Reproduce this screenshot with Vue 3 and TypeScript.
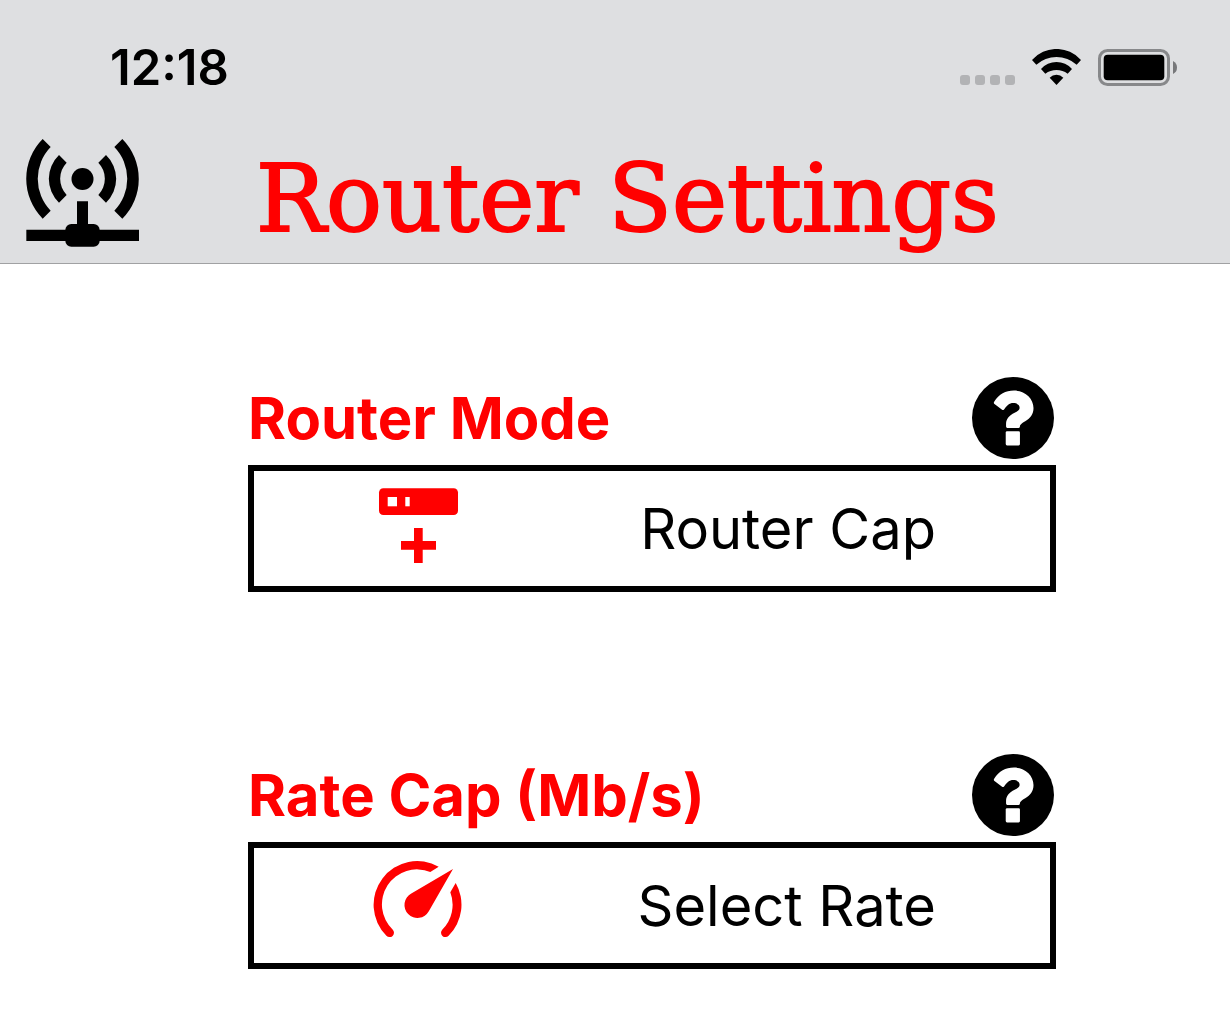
<script setup lang="ts">
interface Field {
  id: string
  label: string
  value: string
  icon: 'router' | 'gauge'
}

const fields: Field[] = [
  { id: 'router-mode', label: 'Router Mode', value: 'Router Cap', icon: 'router' },
  { id: 'rate-cap', label: 'Rate Cap (Mb/s)', value: 'Select Rate', icon: 'gauge' },
]
</script>

<template>
  <div class="screen">
    <header class="header">
      <div class="status">
        <time class="clock">12:18</time>
        <div class="indicators">
          <div class="signal"><span v-for="n in 4" :key="n" class="dot"></span></div>
          <svg class="wifi" viewBox="276 57 147 108" aria-hidden="true">
            <path d="M276 90A98 98 0 0 1 423 90L410 104A91 91 0 0 0 289 104Z" />
            <path d="M303 117A62 62 0 0 1 396 117L383 131A56 56 0 0 0 316 131Z" />
            <path d="M329 143A29 29 0 0 1 370 143L349.5 165Z" />
          </svg>
          <svg class="battery" viewBox="0 0 79 37" aria-hidden="true">
            <rect x="1.5" y="1.5" width="69" height="34" rx="8" fill="none" stroke="#87888a" stroke-width="3" />
            <rect x="5.7" y="5.7" width="60.6" height="25.6" rx="4" />
            <path d="M75 12Q79 14 79 18.5T75 25Z" fill="#77787a" />
          </svg>
        </div>
      </div>
      <div class="nav">
        <svg class="brand" viewBox="48 26 339 324" aria-hidden="true">
          <path d="M98 26L122 50A137 137 0 0 0 122 241L98 265A169 169 0 0 1 98 26Z" />
          <path d="M337 26L313 50A137 137 0 0 1 313 241L337 265A169 169 0 0 0 337 26Z" />
          <path d="M147 74L170 97A70 70 0 0 0 170 194L147 217A99 99 0 0 1 147 74Z" />
          <path d="M288 74L265 97A70 70 0 0 1 265 194L288 217A99 99 0 0 0 288 74Z" />
          <circle cx="217.5" cy="146" r="33" />
          <path d="M201 213H234V298H387V332H49V298H201Z" />
          <rect x="166" y="281" width="103" height="68" rx="18" />
        </svg>
        <h1 class="title">Router Settings</h1>
      </div>
    </header>

    <main class="content">
      <section v-for="field in fields" :key="field.id" class="field">
        <div class="field-head">
          <label class="label" :for="field.id">{{ field.label }}</label>
          <button class="help" type="button" :aria-label="'Help: ' + field.label">
            <svg viewBox="36 34 248 248" aria-hidden="true">
              <circle cx="160" cy="158" r="124" />
              <path
                fill="#fff"
                d="M103 115Q101 112 103 109C118 85 137 75 163 75C196 75 222 98 222 128C222 147 213 158 197 168C185 175 181 179 181 184Q181 188 177 188H143Q139 188 139 184V176C139 160 148 151 165 142C176 136 180 133 180 127C180 118 171 113 161 113C148 113 142 121 133 132Q130 135 127 133Z"
              />
              <rect x="138" y="198" width="43" height="43" rx="4" fill="#fff" />
            </svg>
          </button>
        </div>
        <button :id="field.id" class="picker" type="button">
          <svg v-if="field.icon === 'router'" class="glyph" viewBox="0 0 96 115" aria-hidden="true">
            <rect x="9" y="17.3" width="79" height="26.7" rx="4.3" />
            <rect x="17.7" y="26" width="9.3" height="9.3" fill="#fff" />
            <rect x="35.3" y="26" width="4.4" height="9.3" fill="#fff" />
            <path d="M44 57H52.7V70H66V78.7H52.7V92H44V78.7H31V70H44Z" />
          </svg>
          <svg v-else class="glyph" viewBox="0 0 96 115" aria-hidden="true">
            <path
              d="M68.7 18.7A43.7 43.7 0 0 0 16.4 87.7A4.35 4.35 0 0 0 22.8 81.7A35 35 0 0 1 60.3 24Z"
            />
            <path
              d="M85.7 35L80.3 44.3A35 35 0 0 1 72.2 81.7A4.35 4.35 0 0 0 78.6 87.7A43.7 43.7 0 0 0 85.7 35Z"
            />
            <path d="M83 21L41.3 45.5A13 13 0 1 0 58.8 63.3Z" />
          </svg>
          <span class="value">{{ field.value }}</span>
        </button>
      </section>
    </main>
  </div>
</template>

<style>
body {
  margin: 0;
  background: #fff;
}
</style>

<style scoped>
.screen {
  font-family: Inter, "Liberation Sans", sans-serif;
  color: #000;
}

.header {
  background: #dedfe1;
  border-bottom: 1px solid #a0a1a3;
}

.status {
  display: flex;
  justify-content: space-between;
  align-items: center;
  height: 135px;
  padding: 0 53px 0 110px;
  box-sizing: border-box;
}

.clock {
  font-size: 49px;
  line-height: 60px;
  font-weight: 600;
}

.indicators {
  display: flex;
  align-items: flex-end;
}

.signal {
  display: flex;
  gap: 5px;
  margin: 0 17px 1px 0;
}

.dot {
  width: 10px;
  height: 10px;
  border-radius: 3px;
  background: #b2b3b5;
}

.wifi {
  width: 49px;
  height: 36px;
  margin: 0 17px 1px 0;
}

.battery {
  width: 79px;
  height: 37px;
}

.nav {
  display: flex;
  align-items: center;
  gap: 117px;
  height: 128px;
  padding: 0 26px;
  box-sizing: border-box;
}

.brand {
  flex: none;
  width: 113px;
  height: 108px;
  margin-bottom: 12px;
}

.title {
  margin: 0;
  font-family: "American Typewriter", "DejaVu Serif", serif;
  font-size: 93px;
  line-height: 126px;
  font-weight: 400;
  color: #f00;
  -webkit-text-stroke: 2px #f00;
  white-space: nowrap;
}

.content {
  display: flex;
  flex-direction: column;
  gap: 162px;
  padding: 113px 174px 42px 248px;
}

.field {
  display: flex;
  flex-direction: column;
  gap: 6px;
}

.field-head {
  display: flex;
  justify-content: space-between;
  align-items: center;
  height: 82px;
  padding-right: 2px;
}

.label {
  font-size: 58px;
  line-height: 82px;
  font-weight: 700;
  color: #f00;
  white-space: nowrap;
}

.help {
  width: 82px;
  height: 82px;
  padding: 0;
  border: 0;
  border-radius: 50%;
  background: none;
}

.help svg {
  display: block;
  width: 100%;
  height: 100%;
}

.picker {
  display: flex;
  justify-content: space-between;
  align-items: center;
  width: 100%;
  padding: 0 114px 0 116px;
  border: 6px solid #000;
  border-radius: 0;
  background: #fff;
  font: inherit;
  color: inherit;
}

.glyph {
  flex: none;
  width: 96px;
  height: 115px;
  fill: #f00;
}

.value {
  font-size: 56px;
  line-height: 72px;
  white-space: nowrap;
}
</style>
